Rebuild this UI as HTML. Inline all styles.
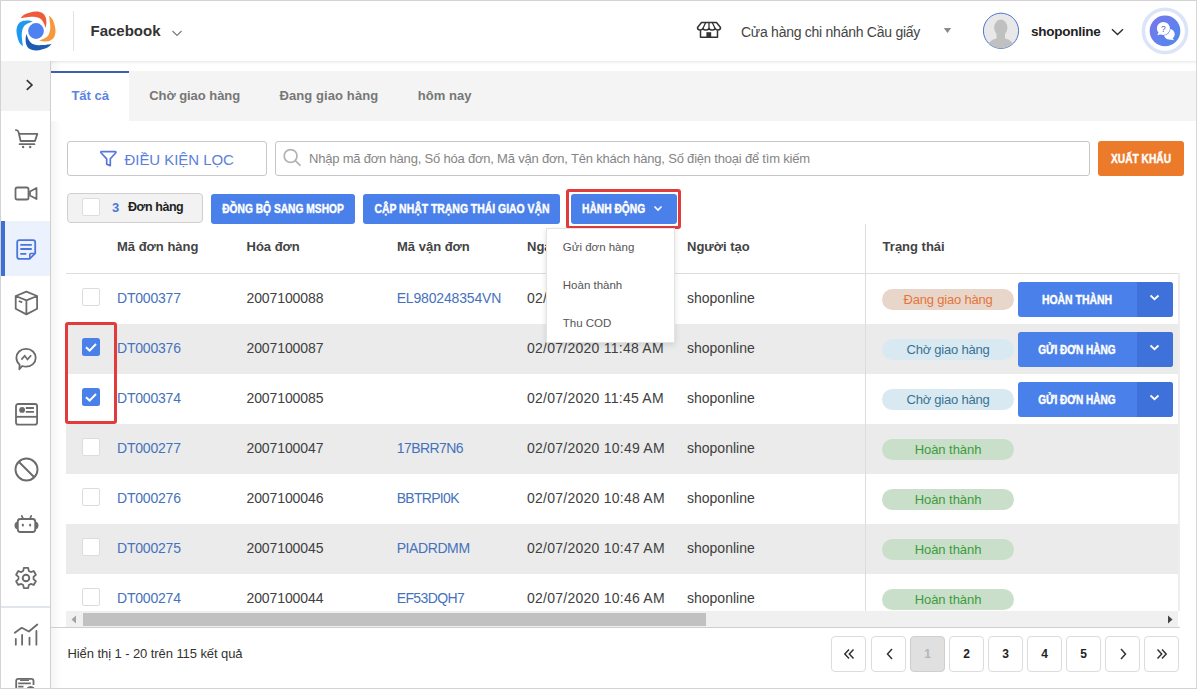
<!DOCTYPE html>
<html><head><meta charset="utf-8">
<style>
*{box-sizing:border-box;margin:0;padding:0}
html,body{width:1197px;height:689px;overflow:hidden;background:#fff;font-family:"Liberation Sans",sans-serif;color:#333}
.r,.t{position:absolute}
.t{white-space:nowrap}
svg.r{overflow:visible}
</style></head><body>
<div class="r" style="left:51px;top:61px;width:10px;height:628px;background:linear-gradient(90deg,rgba(0,0,0,.045),rgba(0,0,0,0));"></div>
<div class="r" style="left:51px;top:71px;width:1145px;height:50px;background:#f4f4f4;"></div>
<div class="r" style="left:51px;top:71px;width:78px;height:50px;background:#fff;"></div>
<div class="r" style="left:51px;top:71px;width:78px;height:2px;background:#3e5fae;"></div>
<div class="t" style="left:71.40px;top:89.00px;font-size:13px;line-height:13px;color:#5b83e0;font-weight:bold;">Tất cả</div>
<div class="t" style="left:149.20px;top:89.00px;font-size:13px;line-height:13px;color:#777;font-weight:bold;letter-spacing:-0.05px;">Chờ giao hàng</div>
<div class="t" style="left:279.40px;top:89.00px;font-size:13px;line-height:13px;color:#777;font-weight:bold;letter-spacing:0.1px;">Đang giao hàng</div>
<div class="t" style="left:417.70px;top:89.00px;font-size:13px;line-height:13px;color:#777;font-weight:bold;letter-spacing:0.05px;">hôm nay</div>
<div class="r" style="left:67px;top:141px;width:200px;height:35px;background:#fff;border:1px solid #c9c9c9;border-radius:3px;"></div>
<svg class="r" style="left:99px;top:150px" width="19" height="17" viewBox="0 0 19 17"><path d="M2.6,1.7 H16 Q17.6,1.7 16.6,3 L11.3,8.8 V15.6 L7.7,14.2 V8.8 L2.2,3 Q1.2,1.7 2.6,1.7 Z" fill="none" stroke="#5876dc" stroke-width="1.7" stroke-linejoin="round"/></svg>
<div class="t" style="left:124.50px;top:152.30px;font-size:15px;line-height:15px;color:#5b7fdc;letter-spacing:-0.05px;">ĐIỀU KIỆN LỌC</div>
<div class="r" style="left:275px;top:141px;width:815px;height:35px;background:#fff;border:1px solid #c6c6c6;border-radius:3px;"></div>
<svg class="r" style="left:283px;top:148px" width="20" height="19" viewBox="0 0 20 19"><circle cx="7.6" cy="8" r="6.4" fill="none" stroke="#b3b3b3" stroke-width="1.7"/><path d="M12.2,12.6 L17,17.2" stroke="#b3b3b3" stroke-width="1.8" stroke-linecap="round"/></svg>
<div class="t" style="left:309.00px;top:152.10px;font-size:13px;line-height:13px;color:#858585;letter-spacing:-0.2px;">Nhập mã đơn hàng, Số hóa đơn, Mã vận đơn, Tên khách hàng, Số điện thoại để tìm kiếm</div>
<div class="r" style="left:1098px;top:141px;width:86px;height:35px;background:#ec7a2b;border-radius:3px;"></div>
<div class="t" style="left:841.00px;width:600px;text-align:center;top:153.14px;font-size:12px;line-height:12px;color:#fff;font-weight:bold;transform:scaleX(0.85);transform-origin:center 0;-webkit-text-stroke:0.4px #fff;">XUẤT KHẨU</div>
<div class="r" style="left:67px;top:193px;width:136px;height:30px;background:#f2f2f2;border:1px solid #cfcfcf;border-radius:4px;"></div>
<div class="r" style="left:82px;top:198px;width:18px;height:18px;background:#fff;border:1px solid #dcdcdc;border-radius:2px;"></div>
<div class="t" style="left:112.00px;top:201.00px;font-size:13px;line-height:13px;color:#4a78d8;font-weight:bold;">3</div>
<div class="t" style="left:128.00px;top:201.42px;font-size:12.5px;line-height:12.5px;color:#222;font-weight:bold;letter-spacing:-0.45px;">Đơn hàng</div>
<div class="r" style="left:211px;top:194px;width:144px;height:30px;background:#4a80ea;border-radius:3px;"></div>
<div class="t" style="left:-17.00px;width:600px;text-align:center;top:202.84px;font-size:12px;line-height:12px;color:#fff;font-weight:bold;transform:scaleX(0.853);transform-origin:center 0;-webkit-text-stroke:0.4px #fff;">ĐỒNG BỘ SANG MSHOP</div>
<div class="r" style="left:363px;top:194px;width:197px;height:30px;background:#4a80ea;border-radius:3px;"></div>
<div class="t" style="left:161.50px;width:600px;text-align:center;top:202.84px;font-size:12px;line-height:12px;color:#fff;font-weight:bold;transform:scaleX(0.868);transform-origin:center 0;-webkit-text-stroke:0.4px #fff;">CẬP NHẬT TRẠNG THÁI GIAO VẬN</div>
<div class="r" style="left:566px;top:189px;width:115px;height:40px;border:3px solid #e23b3b;border-radius:3px;"></div>
<div class="r" style="left:571px;top:194px;width:106px;height:30px;background:#4a80ea;border-radius:3px;"></div>
<div class="t" style="left:582.30px;top:202.84px;font-size:12px;line-height:12px;color:#fff;font-weight:bold;transform:scaleX(0.853);transform-origin:left 0;-webkit-text-stroke:0.4px #fff;">HÀNH ĐỘNG</div>
<svg class="r" style="left:653px;top:205px" width="10" height="7" viewBox="0 0 10 7"><path d="M1.5,1.5 L5,5 L8.5,1.5" fill="none" stroke="#fff" stroke-width="1.6"/></svg>
<div class="r" style="left:66px;top:273px;width:1113px;height:1px;background:#dedede;"></div>
<div class="t" style="left:117.00px;top:240.00px;font-size:13px;line-height:13px;color:#444;font-weight:bold;">Mã đơn hàng</div>
<div class="t" style="left:246.50px;top:240.00px;font-size:13px;line-height:13px;color:#444;font-weight:bold;">Hóa đơn</div>
<div class="t" style="left:397.00px;top:240.00px;font-size:13px;line-height:13px;color:#444;font-weight:bold;">Mã vận đơn</div>
<div class="t" style="left:527.00px;top:240.00px;font-size:13px;line-height:13px;color:#444;font-weight:bold;">Ngày tạo</div>
<div class="t" style="left:687.00px;top:240.00px;font-size:13px;line-height:13px;color:#444;font-weight:bold;">Người tạo</div>
<div class="t" style="left:882.60px;top:240.00px;font-size:13px;line-height:13px;color:#444;font-weight:bold;">Trạng thái</div>
<div class="r" style="left:66px;top:324px;width:1112px;height:50px;background:#ebebeb;"></div>
<div class="r" style="left:66px;top:424px;width:1112px;height:50px;background:#ebebeb;"></div>
<div class="r" style="left:66px;top:524px;width:1112px;height:50px;background:#ebebeb;"></div>
<div class="r" style="left:82px;top:288px;width:18px;height:18px;background:#fff;border:1px solid #dcdcdc;border-radius:2px;"></div>
<div class="t" style="left:117.00px;top:290.85px;font-size:14px;line-height:14px;color:#4672bb;letter-spacing:-0.2px;">DT000377</div>
<div class="t" style="left:246.50px;top:290.85px;font-size:14px;line-height:14px;color:#404040;letter-spacing:-0.1px;">2007100088</div>
<div class="t" style="left:396.70px;top:290.85px;font-size:14px;line-height:14px;color:#4672bb;letter-spacing:-0.17px;">EL980248354VN</div>
<div class="t" style="left:527.00px;top:290.85px;font-size:14px;line-height:14px;color:#404040;letter-spacing:0.25px;">02/07/2020 11:50 AM</div>
<div class="t" style="left:687.00px;top:290.85px;font-size:14px;line-height:14px;color:#404040;">shoponline</div>
<div class="r" style="left:882px;top:289px;width:132px;height:21px;background:#e8d6ca;border-radius:11px;"></div>
<div class="t" style="left:648.00px;width:600px;text-align:center;top:293.00px;font-size:13px;line-height:13px;color:#e5743a;letter-spacing:-0.2px;">Đang giao hàng</div>
<div class="r" style="left:1018px;top:282px;width:155px;height:35px;background:#4a80ea;border-radius:3px;"></div>
<div class="r" style="left:1137px;top:282px;width:36px;height:35px;background:#3f71da;border-radius:0 3px 3px 0;"></div>
<div class="t" style="left:776.80px;width:600px;text-align:center;top:293.64px;font-size:12px;line-height:12px;color:#fff;font-weight:bold;transform:scaleX(0.87);transform-origin:center 0;-webkit-text-stroke:0.4px #fff;">HOÀN THÀNH</div>
<svg class="r" style="left:1149px;top:294px" width="11" height="7" viewBox="0 0 11 7"><path d="M1.5,1.5 L5.5,5.2 L9.5,1.5" fill="none" stroke="#fff" stroke-width="1.8"/></svg>
<svg class="r" style="left:82px;top:338px" width="18" height="18" viewBox="0 0 18 18"><rect x="0" y="0" width="18" height="18" rx="2.5" fill="#4a80ea"/><path d="M4,9.2 L7.6,12.6 L14,6" fill="none" stroke="#fff" stroke-width="2"/></svg>
<div class="t" style="left:117.00px;top:340.85px;font-size:14px;line-height:14px;color:#4672bb;letter-spacing:-0.2px;">DT000376</div>
<div class="t" style="left:246.50px;top:340.85px;font-size:14px;line-height:14px;color:#404040;letter-spacing:-0.1px;">2007100087</div>
<div class="t" style="left:527.00px;top:340.85px;font-size:14px;line-height:14px;color:#404040;letter-spacing:0.25px;">02/07/2020 11:48 AM</div>
<div class="t" style="left:687.00px;top:340.85px;font-size:14px;line-height:14px;color:#404040;">shoponline</div>
<div class="r" style="left:882px;top:339px;width:132px;height:21px;background:#d9e9f1;border-radius:11px;"></div>
<div class="t" style="left:648.00px;width:600px;text-align:center;top:343.00px;font-size:13px;line-height:13px;color:#3a7294;letter-spacing:-0.22px;">Chờ giao hàng</div>
<div class="r" style="left:1018px;top:332px;width:155px;height:35px;background:#4a80ea;border-radius:3px;"></div>
<div class="r" style="left:1137px;top:332px;width:36px;height:35px;background:#3f71da;border-radius:0 3px 3px 0;"></div>
<div class="t" style="left:776.80px;width:600px;text-align:center;top:343.64px;font-size:12px;line-height:12px;color:#fff;font-weight:bold;transform:scaleX(0.84);transform-origin:center 0;-webkit-text-stroke:0.4px #fff;">GỬI ĐƠN HÀNG</div>
<svg class="r" style="left:1149px;top:344px" width="11" height="7" viewBox="0 0 11 7"><path d="M1.5,1.5 L5.5,5.2 L9.5,1.5" fill="none" stroke="#fff" stroke-width="1.8"/></svg>
<svg class="r" style="left:82px;top:388px" width="18" height="18" viewBox="0 0 18 18"><rect x="0" y="0" width="18" height="18" rx="2.5" fill="#4a80ea"/><path d="M4,9.2 L7.6,12.6 L14,6" fill="none" stroke="#fff" stroke-width="2"/></svg>
<div class="t" style="left:117.00px;top:390.85px;font-size:14px;line-height:14px;color:#4672bb;letter-spacing:-0.2px;">DT000374</div>
<div class="t" style="left:246.50px;top:390.85px;font-size:14px;line-height:14px;color:#404040;letter-spacing:-0.1px;">2007100085</div>
<div class="t" style="left:527.00px;top:390.85px;font-size:14px;line-height:14px;color:#404040;letter-spacing:0.25px;">02/07/2020 11:45 AM</div>
<div class="t" style="left:687.00px;top:390.85px;font-size:14px;line-height:14px;color:#404040;">shoponline</div>
<div class="r" style="left:882px;top:389px;width:132px;height:21px;background:#d9e9f1;border-radius:11px;"></div>
<div class="t" style="left:648.00px;width:600px;text-align:center;top:393.00px;font-size:13px;line-height:13px;color:#3a7294;letter-spacing:-0.22px;">Chờ giao hàng</div>
<div class="r" style="left:1018px;top:382px;width:155px;height:35px;background:#4a80ea;border-radius:3px;"></div>
<div class="r" style="left:1137px;top:382px;width:36px;height:35px;background:#3f71da;border-radius:0 3px 3px 0;"></div>
<div class="t" style="left:776.80px;width:600px;text-align:center;top:393.64px;font-size:12px;line-height:12px;color:#fff;font-weight:bold;transform:scaleX(0.84);transform-origin:center 0;-webkit-text-stroke:0.4px #fff;">GỬI ĐƠN HÀNG</div>
<svg class="r" style="left:1149px;top:394px" width="11" height="7" viewBox="0 0 11 7"><path d="M1.5,1.5 L5.5,5.2 L9.5,1.5" fill="none" stroke="#fff" stroke-width="1.8"/></svg>
<div class="r" style="left:82px;top:438px;width:18px;height:18px;background:#fff;border:1px solid #dcdcdc;border-radius:2px;"></div>
<div class="t" style="left:117.00px;top:440.85px;font-size:14px;line-height:14px;color:#4672bb;letter-spacing:-0.2px;">DT000277</div>
<div class="t" style="left:246.50px;top:440.85px;font-size:14px;line-height:14px;color:#404040;letter-spacing:-0.1px;">2007100047</div>
<div class="t" style="left:396.70px;top:440.85px;font-size:14px;line-height:14px;color:#4672bb;letter-spacing:-0.56px;">17BRR7N6</div>
<div class="t" style="left:527.00px;top:440.85px;font-size:14px;line-height:14px;color:#404040;letter-spacing:0.25px;">02/07/2020 10:49 AM</div>
<div class="t" style="left:687.00px;top:440.85px;font-size:14px;line-height:14px;color:#404040;">shoponline</div>
<div class="r" style="left:882px;top:439px;width:132px;height:21px;background:#c9dfc9;border-radius:11px;"></div>
<div class="t" style="left:648.00px;width:600px;text-align:center;top:443.00px;font-size:13px;line-height:13px;color:#3d9b3d;letter-spacing:-0.05px;">Hoàn thành</div>
<div class="r" style="left:82px;top:488px;width:18px;height:18px;background:#fff;border:1px solid #dcdcdc;border-radius:2px;"></div>
<div class="t" style="left:117.00px;top:490.85px;font-size:14px;line-height:14px;color:#4672bb;letter-spacing:-0.2px;">DT000276</div>
<div class="t" style="left:246.50px;top:490.85px;font-size:14px;line-height:14px;color:#404040;letter-spacing:-0.1px;">2007100046</div>
<div class="t" style="left:396.70px;top:490.85px;font-size:14px;line-height:14px;color:#4672bb;letter-spacing:-0.7px;">BBTRPI0K</div>
<div class="t" style="left:527.00px;top:490.85px;font-size:14px;line-height:14px;color:#404040;letter-spacing:0.25px;">02/07/2020 10:48 AM</div>
<div class="t" style="left:687.00px;top:490.85px;font-size:14px;line-height:14px;color:#404040;">shoponline</div>
<div class="r" style="left:882px;top:489px;width:132px;height:21px;background:#c9dfc9;border-radius:11px;"></div>
<div class="t" style="left:648.00px;width:600px;text-align:center;top:493.00px;font-size:13px;line-height:13px;color:#3d9b3d;letter-spacing:-0.05px;">Hoàn thành</div>
<div class="r" style="left:82px;top:538px;width:18px;height:18px;background:#fff;border:1px solid #dcdcdc;border-radius:2px;"></div>
<div class="t" style="left:117.00px;top:540.85px;font-size:14px;line-height:14px;color:#4672bb;letter-spacing:-0.2px;">DT000275</div>
<div class="t" style="left:246.50px;top:540.85px;font-size:14px;line-height:14px;color:#404040;letter-spacing:-0.1px;">2007100045</div>
<div class="t" style="left:396.70px;top:540.85px;font-size:14px;line-height:14px;color:#4672bb;letter-spacing:-0.41px;">PIADRDMM</div>
<div class="t" style="left:527.00px;top:540.85px;font-size:14px;line-height:14px;color:#404040;letter-spacing:0.25px;">02/07/2020 10:47 AM</div>
<div class="t" style="left:687.00px;top:540.85px;font-size:14px;line-height:14px;color:#404040;">shoponline</div>
<div class="r" style="left:882px;top:539px;width:132px;height:21px;background:#c9dfc9;border-radius:11px;"></div>
<div class="t" style="left:648.00px;width:600px;text-align:center;top:543.00px;font-size:13px;line-height:13px;color:#3d9b3d;letter-spacing:-0.05px;">Hoàn thành</div>
<div class="r" style="left:82px;top:588px;width:18px;height:18px;background:#fff;border:1px solid #dcdcdc;border-radius:2px;"></div>
<div class="t" style="left:117.00px;top:590.85px;font-size:14px;line-height:14px;color:#4672bb;letter-spacing:-0.2px;">DT000274</div>
<div class="t" style="left:246.50px;top:590.85px;font-size:14px;line-height:14px;color:#404040;letter-spacing:-0.1px;">2007100044</div>
<div class="t" style="left:396.70px;top:590.85px;font-size:14px;line-height:14px;color:#4672bb;letter-spacing:-0.61px;">EF53DQH7</div>
<div class="t" style="left:527.00px;top:590.85px;font-size:14px;line-height:14px;color:#404040;letter-spacing:0.25px;">02/07/2020 10:46 AM</div>
<div class="t" style="left:687.00px;top:590.85px;font-size:14px;line-height:14px;color:#404040;">shoponline</div>
<div class="r" style="left:882px;top:589px;width:132px;height:21px;background:#c9dfc9;border-radius:11px;"></div>
<div class="t" style="left:648.00px;width:600px;text-align:center;top:593.00px;font-size:13px;line-height:13px;color:#3d9b3d;letter-spacing:-0.05px;">Hoàn thành</div>
<div class="r" style="left:865px;top:224px;width:1px;height:387px;background:#dcdcdc;"></div>
<div class="r" style="left:65px;top:322px;width:52px;height:102px;border:3px solid #e23b3b;border-radius:3px;"></div>
<div class="r" style="left:1178px;top:273px;width:2px;height:338px;background:#eeeeee;"></div>
<div class="r" style="left:66px;top:611px;width:1112px;height:16px;background:#f0f0f0;"></div>
<div class="r" style="left:83px;top:613px;width:623px;height:13px;background:#c1c1c1;"></div>
<svg class="r" style="left:71px;top:615px" width="6" height="9" viewBox="0 0 6 9"><path d="M5,0.5 V8.5 L0.5,4.5 Z" fill="#a3a3a3"/></svg>
<svg class="r" style="left:1167px;top:615px" width="6" height="9" viewBox="0 0 6 9"><path d="M1,0.5 V8.5 L5.5,4.5 Z" fill="#444"/></svg>
<div class="r" style="left:51px;top:627px;width:1129px;height:1px;background:#cfcfcf;"></div>
<div class="t" style="left:67.50px;top:646.70px;font-size:13px;line-height:13px;color:#333;letter-spacing:-0.08px;">Hiển thị 1 - 20 trên 115 kết quả</div>
<div class="r" style="left:831px;top:636px;width:35px;height:36px;background:#fff;border:1px solid #dcdcdc;border-radius:4px;"></div>
<svg class="r" style="left:842.5px;top:648px" width="12" height="12" viewBox="0 0 12 12"><path d="M6,1.5 L1.8,6 L6,10.5 M10.5,1.5 L6.3,6 L10.5,10.5" fill="none" stroke="#333" stroke-width="1.5"/></svg>
<div class="r" style="left:871px;top:636px;width:35px;height:36px;background:#fff;border:1px solid #dcdcdc;border-radius:4px;"></div>
<svg class="r" style="left:884.5px;top:648px" width="9" height="12" viewBox="0 0 9 12"><path d="M7,1 L2.5,6 L7,11" fill="none" stroke="#333" stroke-width="1.5"/></svg>
<div class="r" style="left:910px;top:636px;width:35px;height:36px;background:#e0e0e0;border:1px solid #cfcfcf;border-radius:4px;"></div>
<div class="t" style="left:627.50px;width:600px;text-align:center;top:648.34px;font-size:12px;line-height:12px;color:#b5b5b5;font-weight:bold;">1</div>
<div class="r" style="left:949px;top:636px;width:35px;height:36px;background:#fff;border:1px solid #dcdcdc;border-radius:4px;"></div>
<div class="t" style="left:666.50px;width:600px;text-align:center;top:648.34px;font-size:12px;line-height:12px;color:#222;font-weight:bold;">2</div>
<div class="r" style="left:988px;top:636px;width:35px;height:36px;background:#fff;border:1px solid #dcdcdc;border-radius:4px;"></div>
<div class="t" style="left:705.50px;width:600px;text-align:center;top:648.34px;font-size:12px;line-height:12px;color:#222;font-weight:bold;">3</div>
<div class="r" style="left:1027px;top:636px;width:35px;height:36px;background:#fff;border:1px solid #dcdcdc;border-radius:4px;"></div>
<div class="t" style="left:744.50px;width:600px;text-align:center;top:648.34px;font-size:12px;line-height:12px;color:#222;font-weight:bold;">4</div>
<div class="r" style="left:1066px;top:636px;width:35px;height:36px;background:#fff;border:1px solid #dcdcdc;border-radius:4px;"></div>
<div class="t" style="left:783.50px;width:600px;text-align:center;top:648.34px;font-size:12px;line-height:12px;color:#222;font-weight:bold;">5</div>
<div class="r" style="left:1105px;top:636px;width:35px;height:36px;background:#fff;border:1px solid #dcdcdc;border-radius:4px;"></div>
<svg class="r" style="left:1118.5px;top:648px" width="9" height="12" viewBox="0 0 9 12"><path d="M2,1 L6.5,6 L2,11" fill="none" stroke="#333" stroke-width="1.5"/></svg>
<div class="r" style="left:1144px;top:636px;width:35px;height:36px;background:#fff;border:1px solid #dcdcdc;border-radius:4px;"></div>
<svg class="r" style="left:1155.5px;top:648px" width="12" height="12" viewBox="0 0 12 12"><path d="M1.5,1.5 L5.7,6 L1.5,10.5 M6,1.5 L10.2,6 L6,10.5" fill="none" stroke="#333" stroke-width="1.5"/></svg>
<div class="r" style="left:546px;top:228px;width:129px;height:115px;background:#fff;border:1px solid #e3e3e3;box-shadow:0 2px 6px rgba(0,0,0,.12);"></div>
<div class="t" style="left:562.80px;top:242.07px;font-size:11.5px;line-height:11.5px;color:#555;">Gửi đơn hàng</div>
<div class="t" style="left:562.80px;top:280.27px;font-size:11.5px;line-height:11.5px;color:#555;">Hoàn thành</div>
<div class="t" style="left:562.80px;top:318.07px;font-size:11.5px;line-height:11.5px;color:#555;">Thu COD</div>

<div class="r" style="left:0;top:0;width:1197px;height:61px;background:#fff;box-shadow:0 1px 3px rgba(0,0,0,.11);z-index:5">
<svg class="r" style="left:15px;top:10px" width="42" height="42" viewBox="0 0 42 42"><path d="M5.53,8.02 C6.33,7.34 7.88,5.04 10.35,3.95 C12.81,2.87 17.51,1.68 20.32,1.51 C23.13,1.34 25.50,1.99 27.22,2.94 C28.94,3.89 29.94,5.53 30.64,7.24 C31.33,8.94 31.40,11.40 31.38,13.18 C31.36,14.96 30.66,17.12 30.51,17.91 L30.51,17.91 C30.22,17.13 29.56,14.70 28.78,13.22 C28.00,11.74 27.21,10.07 25.83,9.04 C24.45,8.00 22.46,7.37 20.51,7.01 C18.56,6.65 16.62,6.72 14.12,6.89 C11.62,7.06 6.96,7.83 5.53,8.02Z" fill="#ef5b3a"/><path d="M33.98,5.53 C34.66,6.33 36.96,7.88 38.05,10.35 C39.13,12.81 40.32,17.51 40.49,20.32 C40.66,23.13 40.01,25.50 39.06,27.22 C38.11,28.94 36.47,29.94 34.76,30.64 C33.06,31.33 30.60,31.40 28.82,31.38 C27.04,31.36 24.88,30.66 24.09,30.51 L24.09,30.51 C24.87,30.22 27.30,29.56 28.78,28.78 C30.26,28.00 31.93,27.21 32.96,25.83 C34.00,24.45 34.63,22.46 34.99,20.51 C35.35,18.56 35.28,16.62 35.11,14.12 C34.94,11.62 34.17,6.96 33.98,5.53Z" fill="#f7993b"/><path d="M36.47,33.98 C35.67,34.66 34.12,36.96 31.65,38.05 C29.19,39.13 24.49,40.32 21.68,40.49 C18.87,40.66 16.50,40.01 14.78,39.06 C13.06,38.11 12.06,36.47 11.36,34.76 C10.67,33.06 10.60,30.60 10.62,28.82 C10.64,27.04 11.34,24.88 11.49,24.09 L11.49,24.09 C11.78,24.87 12.44,27.30 13.22,28.78 C14.00,30.26 14.79,31.93 16.17,32.96 C17.55,34.00 19.54,34.63 21.49,34.99 C23.44,35.35 25.38,35.28 27.88,35.11 C30.38,34.94 35.04,34.17 36.47,33.98Z" fill="#1e5cb3"/><path d="M8.02,36.47 C7.34,35.67 5.04,34.12 3.95,31.65 C2.87,29.19 1.68,24.49 1.51,21.68 C1.34,18.87 1.99,16.50 2.94,14.78 C3.89,13.06 5.53,12.06 7.24,11.36 C8.94,10.67 11.40,10.60 13.18,10.62 C14.96,10.64 17.12,11.34 17.91,11.49 L17.91,11.49 C17.13,11.78 14.70,12.44 13.22,13.22 C11.74,14.00 10.07,14.79 9.04,16.17 C8.00,17.55 7.37,19.54 7.01,21.49 C6.65,23.44 6.72,25.38 6.89,27.88 C7.06,30.38 7.83,35.04 8.02,36.47Z" fill="#1f98f0"/><circle cx="21" cy="21" r="7.9" fill="#4d82f0"/></svg>
<div class="r" style="left:73px;top:11px;width:1px;height:40px;background:#e2e2e2;"></div>
<div class="t" style="left:90.50px;top:23.30px;font-size:15px;line-height:15px;color:#333;font-weight:bold;">Facebook</div>
<svg class="r" style="left:171px;top:29px" width="12" height="9" viewBox="0 0 12 9"><path d="M1.5,2 L6,6.5 L10.5,2" fill="none" stroke="#777" stroke-width="1.1"/></svg>
<svg class="r" style="left:697px;top:21px" width="25" height="18" viewBox="0 0 25 18"><path d="M4.5,1.5 H19.5 L23.5,6.5 Q23.5,9 21,9 Q19,9 18.2,7.5 Q17.2,9 15.2,9 Q13,9 12,7.5 Q11,9 8.8,9 Q6.8,9 5.8,7.5 Q5,9 3,9 Q0.5,9 0.5,6.5 Z" fill="none" stroke="#333" stroke-width="1.5" stroke-linejoin="round"/><path d="M8.6,1.8 L5.9,7.5 M12,1.8 V7.5 M15.4,1.8 L18.1,7.5" stroke="#333" stroke-width="1.3" fill="none"/><path d="M3.5,9.2 V16.2 H20.5 V9.2" fill="none" stroke="#333" stroke-width="1.5" stroke-linejoin="round"/><rect x="9.4" y="11.2" width="4.8" height="5.4" fill="#333"/></svg>
<div class="t" style="left:741.00px;top:24.55px;font-size:14px;line-height:14px;color:#444;letter-spacing:-0.26px;">Cửa hàng chi nhánh Cầu giấy</div>
<svg class="r" style="left:943px;top:27px" width="9" height="7" viewBox="0 0 9 7"><path d="M0.8,1 H8.2 L4.5,6 Z" fill="#8a8a8a"/></svg>
<svg class="r" style="left:982px;top:12px" width="38" height="38" viewBox="0 0 38 38"><defs><clipPath id="avc"><circle cx="19" cy="18.8" r="17.4"/></clipPath></defs><circle cx="19" cy="18.8" r="17.6" fill="#e8e8e8" stroke="#4b76d2" stroke-width="1"/><g clip-path="url(#avc)" fill="#c0c0c0"><ellipse cx="18.8" cy="15.6" rx="6.6" ry="8"/><path d="M14.5,21 H23 V26.5 Q31,27.5 33,38 H4.5 Q6.5,27.5 14.5,26.5 Z"/></g></svg>
<div class="t" style="left:1031.00px;top:24.57px;font-size:13.5px;line-height:13.5px;color:#222;font-weight:bold;letter-spacing:-0.25px;">shoponline</div>
<svg class="r" style="left:1111px;top:28px" width="13" height="8" viewBox="0 0 13 8"><path d="M1,1.2 L6.5,6.5 L12,1.2" fill="none" stroke="#333" stroke-width="1.5"/></svg>
<svg class="r" style="left:1141px;top:7px" width="48" height="48" viewBox="0 0 48 48"><defs><linearGradient id="hg" x1="0" y1="0" x2="1" y2="1"><stop offset="0" stop-color="#7c76ea"/><stop offset="1" stop-color="#4a8af0"/></linearGradient></defs><circle cx="24" cy="23.9" r="21.6" fill="none" stroke="#dce5f8" stroke-width="3.6"/><circle cx="24" cy="23.9" r="15.3" fill="url(#hg)"/><circle cx="28.3" cy="27.2" r="5.4" fill="#fff"/><path d="M30.5,30 L33.2,33.3 L27.8,32.2 Z" fill="#fff"/><circle cx="22.4" cy="21.4" r="7.1" fill="#5f7de9"/><circle cx="22.4" cy="21.4" r="6.5" fill="#fff"/><path d="M18.2,24.5 L16.2,28.3 L21,27 Z" fill="#fff"/><text x="22.4" y="24.6" font-size="8.5" font-weight="normal" fill="#5560a8" text-anchor="middle" font-family="Liberation Sans">?</text></svg>

</div>
<div class="r" style="left:0;top:0;width:1197px;height:689px;z-index:6">
<div class="r" style="left:0px;top:61px;width:50px;height:50px;background:#f2f2f2;"></div>
<svg class="r" style="left:24px;top:77.4px" width="10" height="15" viewBox="0 0 10 15"><path d="M2.8,3.2 L7.9,8 L2.8,12.8" fill="none" stroke="#333" stroke-width="1.7"/></svg>
<div class="r" style="left:0px;top:221px;width:50px;height:55px;background:#ebf2fd;"></div>
<div class="r" style="left:1px;top:221px;width:4px;height:55px;background:#3d6fd6;"></div>
<svg class="r" style="left:15px;top:129px" width="24" height="20" viewBox="0 0 24 20"><path d="M0.9,1.1 Q3,0.9 3.6,3.2 L5.6,12 H20 L22.3,4.9 H4.2" fill="none" stroke="#6b6b6b" stroke-width="1.8" stroke-linejoin="round" stroke-linecap="round"/><path d="M4.6,15.2 H19.4" stroke="#6b6b6b" stroke-width="1.8" stroke-linecap="round"/><circle cx="8.1" cy="18" r="1.2" fill="#6b6b6b"/><circle cx="15.2" cy="18" r="1.2" fill="#6b6b6b"/></svg>
<svg class="r" style="left:14px;top:186px" width="24" height="15" viewBox="0 0 24 15"><rect x="1.5" y="1.5" width="13" height="12" rx="1.8" fill="none" stroke="#6b6b6b" stroke-width="1.8"/><path d="M16,5.5 L22.5,2 V13 L16,9.5 Z" fill="none" stroke="#6b6b6b" stroke-width="1.8" stroke-linejoin="round"/></svg>
<svg class="r" style="left:16px;top:239px" width="21" height="22" viewBox="0 0 21 22"><path d="M3.4,1.1 H17 Q19.2,1.1 19.2,3.3 V14.3 L13.6,19.9 H3.4 Q1.2,19.9 1.2,17.7 V3.3 Q1.2,1.1 3.4,1.1 Z" fill="none" stroke="#4a76dc" stroke-width="1.8" stroke-linejoin="round"/><path d="M4.3,5.9 H15.8 M4.3,10 H15.8 M4.3,14.9 H10.3" stroke="#4a76dc" stroke-width="1.8"/><path d="M13.8,19.5 V15.6 Q13.8,14.5 14.9,14.5 H18.8" fill="none" stroke="#4a76dc" stroke-width="1.6"/></svg>
<svg class="r" style="left:14px;top:290px" width="25" height="27" viewBox="0 0 25 27"><path d="M12.4,1.7 L23.1,6 V18.8 L12.4,24.4 L1.7,18.8 V6 Z M1.7,6 L12.4,10.4 L23.1,6 M12.4,10.4 V24.4" fill="none" stroke="#6b6b6b" stroke-width="1.8" stroke-linejoin="round"/><path d="M4.8,11 L8.2,12.4" stroke="#6b6b6b" stroke-width="1.8"/></svg>
<svg class="r" style="left:14px;top:347px" width="24" height="24" viewBox="0 0 24 24"><path d="M12,1.9 C17.7,1.9 21.7,5.8 21.7,10.8 C21.7,15.8 17.7,19.6 12,19.6 C10.6,19.6 9.3,19.4 8.2,19 L5.4,22.2 L5.6,17.6 C3.6,16 2.4,13.5 2.4,10.8 C2.4,5.8 6.4,1.9 12,1.9 Z" fill="none" stroke="#6b6b6b" stroke-width="1.8" stroke-linejoin="round"/><path d="M7.4,12.6 L10.7,8.8 L13.5,12.4 L17.2,8.3" fill="none" stroke="#6b6b6b" stroke-width="1.7" stroke-linejoin="miter"/></svg>
<svg class="r" style="left:14px;top:403px" width="25" height="24" viewBox="0 0 25 24"><rect x="2" y="1" width="21.1" height="20.7" rx="2.2" fill="none" stroke="#6b6b6b" stroke-width="1.8"/><path d="M2,13.8 H23.1" stroke="#6b6b6b" stroke-width="1.8"/><circle cx="8.1" cy="6.9" r="2.9" fill="#6b6b6b"/><path d="M11.8,5 H19.9 M11.8,8.9 H19.9" stroke="#6b6b6b" stroke-width="1.8"/></svg>
<svg class="r" style="left:14px;top:456.6px" width="25" height="25" viewBox="0 0 25 25"><circle cx="12.5" cy="12.5" r="11" fill="none" stroke="#6b6b6b" stroke-width="1.9"/><path d="M5,5 L20,20" stroke="#6b6b6b" stroke-width="1.9"/></svg>
<svg class="r" style="left:14px;top:514px" width="25" height="19" viewBox="0 0 25 19"><rect x="3.8" y="5" width="17.4" height="13" rx="2.5" fill="none" stroke="#6b6b6b" stroke-width="1.8"/><path d="M7.8,1.8 L9.2,5 M17.2,1.8 L15.8,5" stroke="#6b6b6b" stroke-width="1.7" stroke-linecap="round"/><path d="M3.8,7.5 Q0.5,8.2 0.5,11.5 Q0.5,14.8 3.8,15.5 Z M21.2,7.5 Q24.5,8.2 24.5,11.5 Q24.5,14.8 21.2,15.5 Z" fill="#6b6b6b"/><rect x="7.9" y="9.8" width="1.9" height="2.7" rx="0.8" fill="#6b6b6b"/><rect x="15.2" y="9.8" width="1.9" height="2.7" rx="0.8" fill="#6b6b6b"/></svg>
<svg class="r" style="left:14px;top:566px" width="24" height="24" viewBox="0 0 24 24"><path d="M9.20,4.93 L9.84,1.83 L14.16,1.83 L14.80,4.93 L16.72,6.04 L19.73,5.04 L21.89,8.79 L19.52,10.89 L19.52,13.11 L21.89,15.21 L19.73,18.96 L16.72,17.96 L14.80,19.07 L14.16,22.17 L9.84,22.17 L9.20,19.07 L7.28,17.96 L4.27,18.96 L2.11,15.21 L4.48,13.11 L4.48,10.89 L2.11,8.79 L4.27,5.04 L7.28,6.04Z" fill="none" stroke="#6b6b6b" stroke-width="1.8" stroke-linejoin="round"/><circle cx="12" cy="12" r="3.3" fill="none" stroke="#6b6b6b" stroke-width="1.9"/></svg>
<svg class="r" style="left:13px;top:622px" width="26" height="25" viewBox="0 0 26 25"><path d="M1.8,10.8 L8.7,5.8 L15.9,9.5 L24.3,2.5" fill="none" stroke="#6b6b6b" stroke-width="1.8" stroke-linejoin="round" stroke-linecap="round"/><path d="M2.8,17 V22.7 M9.1,13 V22.7 M16.5,15.6 V22.7 M23.4,9 V22.7" stroke="#6b6b6b" stroke-width="1.8" stroke-linecap="round"/></svg>
<svg class="r" style="left:15px;top:678px" width="22" height="12" viewBox="0 0 22 12"><path d="M1.2,11 V3 Q1.2,0.9 3.3,0.9 H16.4 Q18.5,0.9 18.5,3 V7" fill="none" stroke="#6b6b6b" stroke-width="1.8"/><path d="M5,2.3 H14 M3.2,5.4 H15.8 M3.2,8.6 H8.5" stroke="#6b6b6b" stroke-width="1.6"/><path d="M11.5,11.5 Q15.5,6.5 20,11.5" fill="none" stroke="#6b6b6b" stroke-width="1.8"/></svg>
<div class="r" style="left:0px;top:606px;width:50px;height:2px;background:#e1e6ee;"></div>
<div class="r" style="left:50px;top:61px;width:1px;height:628px;background:#d0d0d0;"></div>

</div>
<div class="r" style="left:0;top:0;width:1197px;height:1px;background:#d3d3d3;z-index:9"></div>
<div class="r" style="left:0;top:0;width:1px;height:689px;background:#d3d3d3;z-index:9"></div>
<div class="r" style="left:1196px;top:0;width:1px;height:689px;background:#d6d6d6;z-index:9"></div>
<div class="r" style="left:0;top:688px;width:1197px;height:1px;background:#d3d3d3;z-index:9"></div>
</body></html>
